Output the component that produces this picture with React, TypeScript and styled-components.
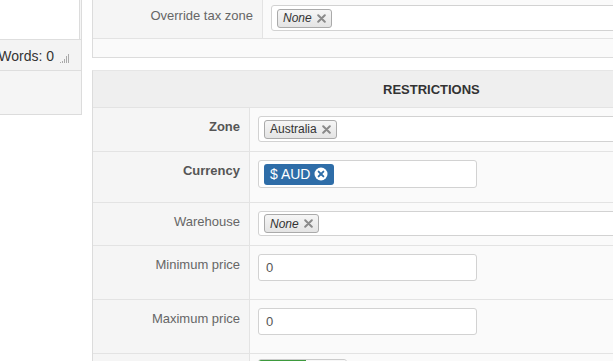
import React from 'react';
import styled, { createGlobalStyle } from 'styled-components';

const GlobalStyle = createGlobalStyle`
  html, body {
    margin: 0;
    padding: 0;
    background: #fff;
    overflow: hidden;
  }
  body {
    font-family: 'Liberation Sans', Arial, sans-serif;
    color: #555;
  }
`;

const RemoveX = ({ color = '#8a8a8a' }: { color?: string }) => (
  <svg width="9" height="9" viewBox="0 0 9 9">
    <path d="M1.2 1.2 L7.8 7.8 M7.8 1.2 L1.2 7.8" stroke={color} strokeWidth="2" strokeLinecap="round" />
  </svg>
);

const RemoveCircle = () => (
  <svg width="14" height="14" viewBox="0 0 14 14">
    <circle cx="7" cy="7" r="6.5" fill="#fff" />
    <path d="M4.6 4.6 L9.4 9.4 M9.4 4.6 L4.6 9.4" stroke="#2e6da8" strokeWidth="1.9" strokeLinecap="round" />
  </svg>
);

const Grip = () => (
  <svg width="11" height="11" viewBox="0 0 11 11">
    <rect x="0" y="9" width="1" height="1" fill="#aaa" />
    <rect x="2" y="8" width="1" height="2" fill="#aaa" />
    <rect x="4" y="6" width="1" height="4" fill="#aaa" />
    <rect x="6" y="3" width="1" height="7" fill="#aaa" />
    <rect x="8" y="1" width="1" height="9" fill="#aaa" />
  </svg>
);

export default function App() {
  return (
    <>
      <GlobalStyle />
      <Page>
        <Side>
          <Editor />
          <StatusBar>
            Words: 0
            <GripWrap>
              <Grip />
            </GripWrap>
          </StatusBar>
        </Side>
        <Main>
          <Panel $noTop>
            <Row $height={38} $first $labelWidth={170}>
              <Label $top={7}>Override tax zone</Label>
              <Value $top={5}>
                <TagInput $h={26}>
                  <Tag $italic>
                    None <RemoveX />
                  </Tag>
                </TagInput>
              </Value>
            </Row>
            <Footer />
          </Panel>
          <Panel>
            <Header>RESTRICTIONS</Header>
            <Row $height={43} $first>
              <Label $bold>Zone</Label>
              <Value>
                <TagInput $h={26}>
                  <Tag>
                    Australia <RemoveX />
                  </Tag>
                </TagInput>
              </Value>
            </Row>
            <Row $height={51}>
              <Label $bold>Currency</Label>
              <Value>
                <TagInput $h={28} $narrow>
                  <BlueTag>
                    $ AUD <RemoveCircle />
                  </BlueTag>
                </TagInput>
              </Value>
            </Row>
            <Row $height={43}>
              <Label>Warehouse</Label>
              <Value>
                <TagInput $h={25}>
                  <Tag $italic>
                    None <RemoveX />
                  </Tag>
                </TagInput>
              </Value>
            </Row>
            <Row $height={54}>
              <Label>Minimum price</Label>
              <Value>
                <TextInput defaultValue="0" readOnly />
              </Value>
            </Row>
            <Row $height={54}>
              <Label>Maximum price</Label>
              <Value>
                <TextInput defaultValue="0" readOnly />
              </Value>
            </Row>
            <Row $height={40}>
              <Label />
              <Value $top={5}>
                <Toggle>
                  <ToggleOn />
                  <ToggleOff />
                </Toggle>
              </Value>
            </Row>
          </Panel>
        </Main>
      </Page>
    </>
  );
}

const Page = styled.div`
  display: flex;
  gap: 10px;
  width: 700px;
`;

const Side = styled.div`
  width: 82px;
  height: 115px;
  box-sizing: border-box;
  background: #f5f5f5;
  border-right: 1px solid #dcdcdc;
  border-bottom: 1px solid #dcdcdc;
  flex-shrink: 0;
`;

const Editor = styled.div`
  width: 80px;
  height: 39px;
  box-sizing: border-box;
  background: #fff;
  border-right: 1px solid #dcdcdc;
`;

const StatusBar = styled.div`
  width: 81px;
  height: 32px;
  box-sizing: border-box;
  border-top: 1px solid #dedede;
  border-bottom: 1px solid #dedede;
  background: #f3f3f3;
  display: flex;
  align-items: center;
  justify-content: flex-end;
  padding-right: 10px;
  padding-top: 2px;
  font-size: 14px;
  color: #333;
  white-space: nowrap;
`;

const GripWrap = styled.span`
  display: inline-flex;
  margin-left: 6px;
  margin-top: 4px;
`;

const Main = styled.div`
  width: 580px;
  display: flex;
  flex-direction: column;
  gap: 12px;
  flex-shrink: 0;
`;

const Panel = styled.div<{ $noTop?: boolean }>`
  border: 1px solid #dcdcdc;
  border-top: ${(p) => (p.$noTop ? 'none' : '1px solid #e6e6e6')};
  background: #fafafa;
`;

const Footer = styled.div`
  height: 18px;
  border-top: 1px solid #e3e3e3;
  background: #fafafa;
`;

const Header = styled.div`
  height: 37px;
  border-bottom: 1px solid #e3e3e3;
  background: #efefef;
  display: flex;
  align-items: center;
  padding-left: 290px;
  padding-top: 1px;
  box-sizing: border-box;
  font-size: 13px;
  font-weight: bold;
  color: #333;
`;

const Row = styled.div<{ $height: number; $first?: boolean; $labelWidth?: number }>`
  display: grid;
  grid-template-columns: ${(p) => p.$labelWidth ?? 157}px 1fr;
  height: ${(p) => p.$height}px;
  box-sizing: border-box;
  border-top: ${(p) => (p.$first ? 'none' : '1px solid #e3e3e3')};
`;

const Label = styled.div<{ $bold?: boolean; $top?: number }>`
  background: #f5f5f5;
  border-right: 1px solid #e3e3e3;
  text-align: right;
  padding: ${(p) => p.$top ?? 10}px 9px 0 0;
  font-size: 13px;
  line-height: 18px;
  font-weight: ${(p) => (p.$bold ? 'bold' : 'normal')};
  color: ${(p) => (p.$bold ? '#555' : '#666')};
`;

const Value = styled.div<{ $top?: number }>`
  background: #fafafa;
  padding: ${(p) => p.$top ?? 8}px 0 0 8px;
`;

const TagInput = styled.div<{ $h: number; $narrow?: boolean }>`
  height: ${(p) => p.$h}px;
  width: ${(p) => (p.$narrow ? '219px' : '420px')};
  box-sizing: border-box;
  border: 1px solid #d2d2d2;
  border-radius: 3px;
  background: #fff;
  display: flex;
  align-items: center;
  padding-left: 5px;
`;

const Tag = styled.span<{ $italic?: boolean }>`
  display: inline-flex;
  align-items: center;
  gap: 5px;
  height: 19px;
  box-sizing: border-box;
  padding: 0 5px 0 5px;
  border: 1px solid #aaa;
  border-radius: 3px;
  background: linear-gradient(#f6f6f6, #e4e4e4);
  font-size: 12px;
  font-style: ${(p) => (p.$italic ? 'italic' : 'normal')};
  color: #333;
`;

const BlueTag = styled.span`
  display: inline-flex;
  align-items: center;
  gap: 4px;
  height: 21px;
  padding: 0 6px 0 6px;
  border-radius: 3px;
  background: #2e6da8;
  color: #fff;
  font-size: 14px;
`;

const TextInput = styled.input`
  display: block;
  width: 219px;
  height: 27px;
  box-sizing: border-box;
  border: 1px solid #d2d2d2;
  border-radius: 3px;
  background: #fff;
  padding: 0 7px;
  font-family: 'Liberation Sans', Arial, sans-serif;
  font-size: 13px;
  color: #555;
  outline: none;
`;

const Toggle = styled.div`
  display: flex;
  width: 89px;
  height: 26px;
  border-radius: 3px;
  overflow: hidden;
  border: 1px solid #ccc;
  box-sizing: border-box;
`;

const ToggleOn = styled.div`
  width: 47px;
  background: #3d9a3d;
`;

const ToggleOff = styled.div`
  flex: 1;
  background: #f7f7f7;
`;
